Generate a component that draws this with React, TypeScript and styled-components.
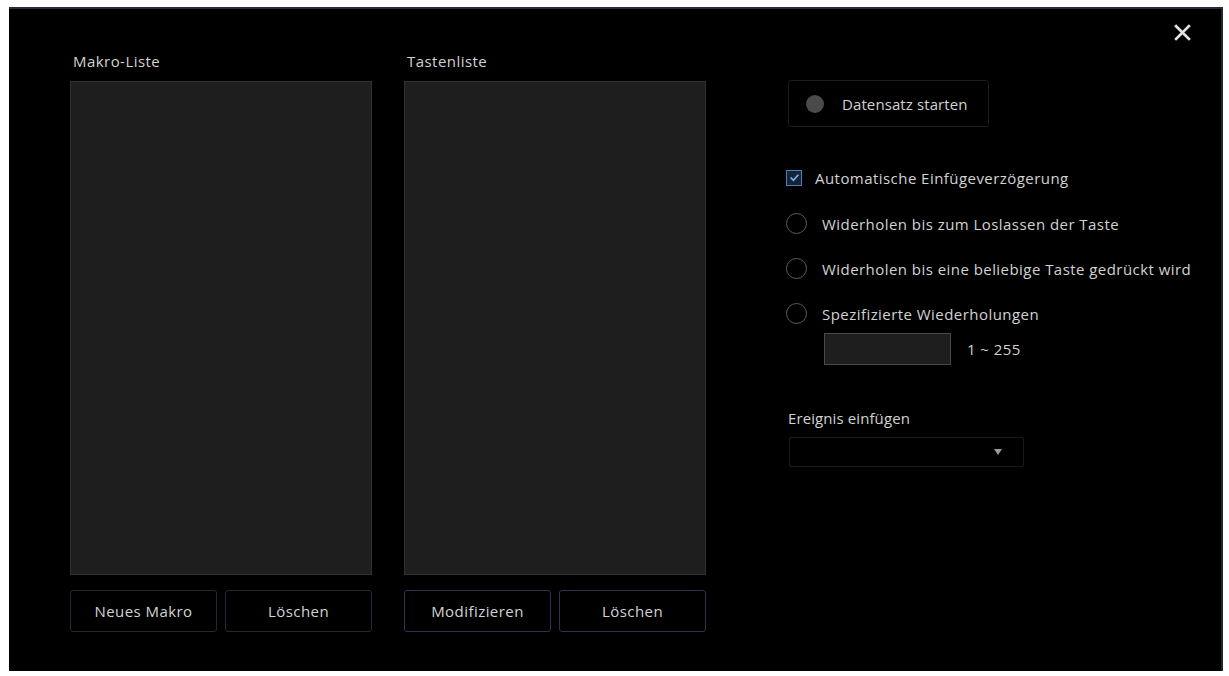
import styled, { createGlobalStyle } from "styled-components";

const GlobalStyle = createGlobalStyle`
  html, body {
    margin: 0;
    padding: 0;
    background: #ffffff;
  }
  body {
    font-family: "Open Sans", "Liberation Sans", sans-serif;
  }
`;

const Page = styled.div`
  width: 1229px;
  height: 676px;
  padding: 7px 6px 5px 9px;
  box-sizing: border-box;
`;

const Dialog = styled.div`
  position: relative;
  width: 100%;
  height: 100%;
  box-sizing: border-box;
  background: #000;
  border-top: 2px solid #2e2c3a;
  border-right: 2px solid #1d2a2c;
  display: flex;
  gap: 32px;
  padding: 43px 0 0 61px;
  color: #d2d2d2;
  font-size: 15px;
  letter-spacing: 0.45px;
`;

const ListColumn = styled.div`
  width: 302px;
  display: flex;
  flex-direction: column;
`;

const Label = styled.div`
  height: 18px;
  line-height: 18px;
  margin-bottom: 11px;
  padding-left: 3px;
`;

const ListBox = styled.div`
  height: 494px;
  background: #1e1e1e;
  border: 1px solid #333;
  box-sizing: border-box;
`;

const ButtonRow = styled.div`
  display: flex;
  gap: 8px;
  margin-top: 15px;
`;

const Button = styled.button<{ $accent?: boolean }>`
  flex: 1;
  height: 42px;
  background: #000;
  border: 1px solid ${(p) => (p.$accent ? "#2b3350" : "#262636")};
  border-radius: 3px;
  color: #d2d2d2;
  font-family: inherit;
  font-size: 15px;
  letter-spacing: 0.45px;
  cursor: pointer;
`;

const Side = styled.div`
  margin-left: 48px;
  display: flex;
  flex-direction: column;
  padding-top: 28px;
`;

const CloseBtn = styled.button`
  position: absolute;
  top: 13px;
  right: 29px;
  width: 20px;
  height: 20px;
  padding: 0;
  background: none;
  border: none;
  cursor: pointer;
  display: flex;
  align-items: center;
  justify-content: center;
`;

const RecordBtn = styled.button`
  margin-left: 2px;
  width: 201px;
  height: 47px;
  display: flex;
  align-items: center;
  gap: 18px;
  padding: 0 0 0 17px;
  background: #000;
  border: 1px solid #1c1c1c;
  border-radius: 3px;
  color: #d2d2d2;
  font-family: inherit;
  font-size: 15px;
  letter-spacing: 0.1px;
`;

const Dot = styled.span`
  width: 18px;
  height: 18px;
  border-radius: 50%;
  background: #4a4a4a;
`;

const Options = styled.div`
  display: flex;
  flex-direction: column;
  margin-top: 27px;
`;

const OptionRow = styled.label<{ $first?: boolean }>`
  height: ${(p) => (p.$first ? "47px" : "45px")};
  display: flex;
  align-items: center;
  gap: ${(p) => (p.$first ? "13px" : "15px")};
`;

const Check = styled.span`
  width: 16px;
  height: 16px;
  box-sizing: border-box;
  border: 1px solid #4f7fb8;
  background: #132338;
  display: flex;
  align-items: center;
  justify-content: center;
`;

const Radio = styled.span`
  width: 21px;
  height: 21px;
  box-sizing: border-box;
  border: 1.5px solid #5c5c5c;
  border-radius: 50%;
`;

const CountRow = styled.div`
  display: flex;
  align-items: center;
  gap: 16px;
  margin-left: 38px;
  margin-top: -3px;
`;

const CountInput = styled.input`
  width: 127px;
  height: 32px;
  box-sizing: border-box;
  background: #1e1e1e;
  border: 1px solid #4a4a4a;
  color: #d2d2d2;
  font-family: inherit;
  outline: none;
`;

const Range = styled.span``;

const EventLabel = styled.div`
  margin-top: 44px;
  margin-left: 2px;
  line-height: 18px;
  letter-spacing: 0.1px;
`;

const Select = styled.div`
  margin-top: 10px;
  margin-left: 3px;
  width: 235px;
  height: 30px;
  box-sizing: border-box;
  border: 1px solid #1a1a1a;
  border-radius: 2px;
  display: flex;
  align-items: center;
  justify-content: flex-end;
  padding-right: 21px;
`;

const Arrow = styled.span`
  width: 0;
  height: 0;
  border-left: 4px solid transparent;
  border-right: 4px solid transparent;
  border-top: 6px solid #9a9a9a;
`;

export default function App() {
  return (
    <>
      <GlobalStyle />
      <Page>
        <Dialog>
          <CloseBtn aria-label="close">
            <svg width="17" height="17" viewBox="0 0 16 16">
              <path d="M2 2 L14 14 M14 2 L2 14" stroke="#e4e4e4" strokeWidth="2.6" strokeLinecap="square" />
            </svg>
          </CloseBtn>

          <ListColumn>
            <Label>Makro-Liste</Label>
            <ListBox />
            <ButtonRow>
              <Button>Neues Makro</Button>
              <Button>Löschen</Button>
            </ButtonRow>
          </ListColumn>

          <ListColumn>
            <Label>Tastenliste</Label>
            <ListBox />
            <ButtonRow>
              <Button $accent>Modifizieren</Button>
              <Button $accent>Löschen</Button>
            </ButtonRow>
          </ListColumn>

          <Side>
            <RecordBtn>
              <Dot />
              Datensatz starten
            </RecordBtn>

            <Options>
              <OptionRow $first>
                <Check>
                  <svg width="11" height="11" viewBox="0 0 10 10">
                    <path d="M1.5 5 L4 7.5 L8.5 2.5" stroke="#7fb0e6" strokeWidth="1.6" fill="none" />
                  </svg>
                </Check>
                Automatische Einfügeverzögerung
              </OptionRow>
              <OptionRow>
                <Radio />
                Widerholen bis zum Loslassen der Taste
              </OptionRow>
              <OptionRow>
                <Radio />
                Widerholen bis eine beliebige Taste gedrückt wird
              </OptionRow>
              <OptionRow>
                <Radio />
                Spezifizierte Wiederholungen
              </OptionRow>
            </Options>

            <CountRow>
              <CountInput />
              <Range>1 ~ 255</Range>
            </CountRow>

            <EventLabel>Ereignis einfügen</EventLabel>
            <Select>
              <Arrow />
            </Select>
          </Side>
        </Dialog>
      </Page>
    </>
  );
}
